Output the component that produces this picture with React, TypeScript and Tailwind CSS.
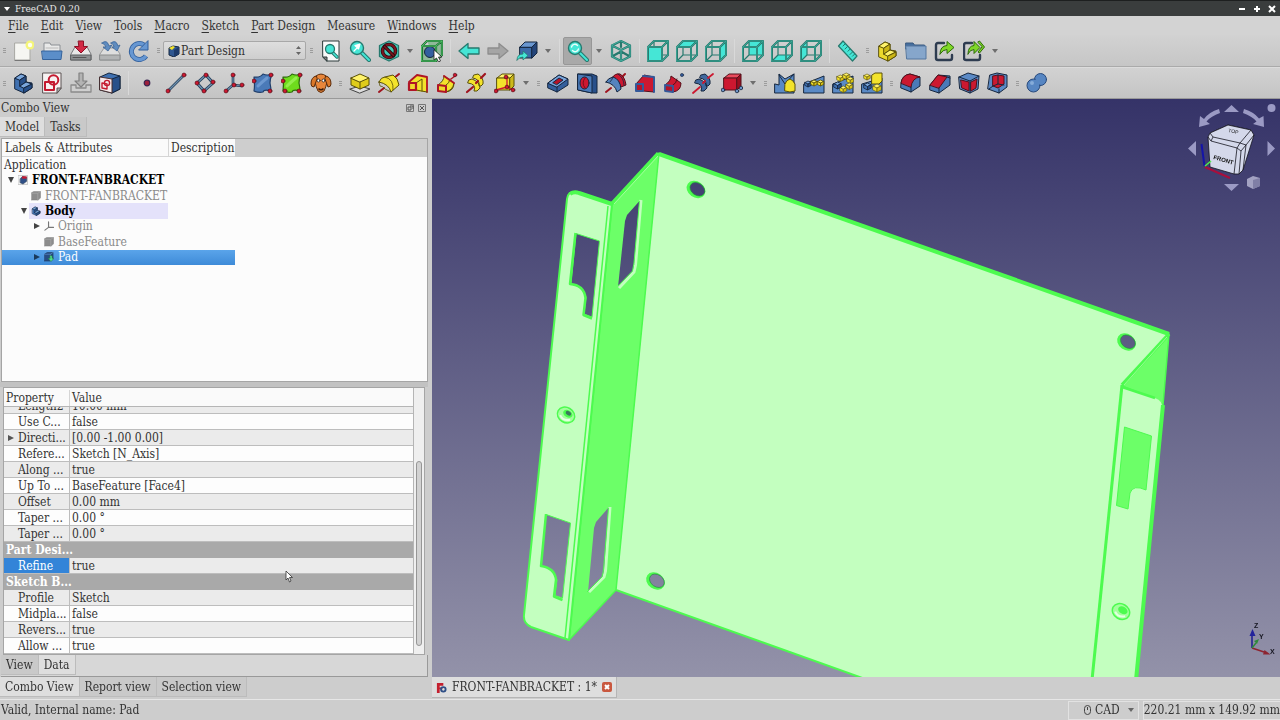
import React, { useLayoutEffect, useRef, useState } from 'react';
import clsx from 'clsx';

/* ---------- icons ---------- */

const Svg: React.FC<{ children: React.ReactNode; size?: number }> = ({ children, size = 22 }) => (
  <svg width={size} height={size} viewBox="0 0 22 22" fill="none" strokeLinejoin="round" strokeLinecap="round" aria-hidden="true">
    {children}
  </svg>
);

const TEAL = '#45e6d6';
const TEAL_DARK = '#26796e';
const BLUE = '#4a7ab8';
const NAVY = '#15263f';
const YELLOW = '#f3e32c';
const OLIVE = '#5a5008';
const RED = '#cc1830';

const IsoBox: React.FC<{ x: number; y: number; s: number; c: [string, string, string]; line: string; w?: number }> = ({ x, y, s, c, line, w = 1 }) => {
  const h = s / 2;
  const q = s / 4;
  return (
    <g stroke={line} strokeWidth={w}>
      <path d={`M${x} ${y + q}l${h} ${-q}l${h} ${q}l${-h} ${q}z`} fill={c[0]} />
      <path d={`M${x} ${y + q}l${h} ${q}v${h}l${-h} ${-q}z`} fill={c[1]} />
      <path d={`M${x + s} ${y + q}l${-h} ${q}v${h}l${h} ${-q}z`} fill={c[2]} />
    </g>
  );
};

const blues: [string, string, string] = ['#7aa6dc', '#3f70b0', '#28508a'];
const yellows: [string, string, string] = ['#fff36b', '#f0df2a', '#d9c414'];

// L-shaped solid used for bodies and parts
const Body: React.FC<{ c: [string, string, string]; line: string; size?: number }> = ({ c, line, size }) => (
  <Svg size={size}>
    <g stroke={line} strokeWidth="1">
      <path d="M3 6l6-4 5 2v6l6 1v5l-8 5-9-4z" fill={c[1]} />
      <path d="M3 6l6-4 5 2-6 4z" fill={c[0]} />
      <path d="M8 8l6-4v6l-6 4z" fill={c[2]} />
      <path d="M8 14l6-4 6 2-8 4z" fill={c[0]} />
      <path d="M12 16l8-4v4l-8 5z" fill={c[2]} />
    </g>
  </Svg>
);

const ViewCube: React.FC<{ face: 'front' | 'top' | 'right' | 'rear' | 'bottom' | 'left' }> = ({ face }) => {
  const faces = {
    front: 'M1 7h14v14h-14z',
    top: 'M1 7l6-6h14l-6 6z',
    right: 'M15 7l6-6v14l-6 6z',
    rear: 'M7 1h14v14h-14z',
    bottom: 'M1 21l6-6h14l-6 6z',
    left: 'M1 7l6-6v14l-6 6z',
  };
  return (
    <Svg>
      <path d={faces[face]} fill={TEAL} />
      <path d="M7 1v14h14M7 15l-6 6" stroke={TEAL_DARK} strokeWidth="1.2" />
      {(face === 'front' || face === 'top' || face === 'right') && <path d={faces[face]} fill={TEAL} />}
      <path d="M1 7h14v14h-14zM7 1h14v14l-6 6M1 7l6-6M15 7l6-6" stroke={TEAL_DARK} strokeWidth="2" />
      <path d="M1 7h14v14h-14zM7 1h14v14l-6 6M1 7l6-6M15 7l6-6" stroke="#3fae9d" strokeWidth="0.800" />
    </Svg>
  );
};

const Lens: React.FC<{ glyph?: React.ReactNode }> = ({ glyph }) => (
  <Svg>
    <path d="M13 13l7 7" stroke={TEAL_DARK} strokeWidth="4" />
    <path d="M13 13l7 7" stroke={TEAL} strokeWidth="2" />
    <circle cx="8" cy="8" r="6.500" fill={TEAL} stroke={TEAL_DARK} strokeWidth="1.400" />
    {glyph}
  </Svg>
);

const icons: Record<string, React.ReactNode> = {
  new: (
    <Svg>
      <path d="M3 3h15v17h-15z" fill="#f6f6f2" stroke="#a9a9a4" />
      <path d="M3 20.500h15" stroke="#777" strokeWidth="1" />
      <circle cx="18" cy="5" r="4.500" fill="#f4f57a" />
      <circle cx="18" cy="5" r="2.200" fill="#fffff0" />
    </Svg>
  ),
  open: (
    <Svg>
      <path d="M3 12v-9h6l1 2h9v7z" fill="#e9e9e9" stroke="#8b8f94" />
      <path d="M1 11h20l-1 8.500h-18z" fill="#5b8ec9" stroke="#35639c" />
      <path d="M5 8h12" stroke="#b8b8b8" />
    </Svg>
  ),
  save: (
    <Svg>
      <path d="M1 14l4-7h12l4 7v6h-20z" fill="#e8e8e8" stroke="#77797b" />
      <path d="M1 15h20v5h-20z" fill="#8d9092" stroke="#5c5f61" />
      <path d="M3 17.500h13" stroke="#555" />
      <path d="M8.500 1h5v5.500h4l-6.500 6.500-6.500-6.500h4z" fill="#d32a45" stroke="#8c1227" />
    </Svg>
  ),
  saveAs: (
    <Svg>
      <path d="M1 14l4-6h12l4 6v6h-20z" fill="#dedede" stroke="#9a9c9e" />
      <path d="M1 15h20v5h-20z" fill="#b2b4b5" stroke="#8b8d8e" />
      <path d="M3 3q5-4 7 3l3-1-4 6-5-4 3 0q-1-3-4-4zM12 3q5-4 7 3l2-1-3 6-5-4 2 0q0-3-3-4z" fill="#5f8cc0" stroke="#3b6597" strokeWidth="0.800" />
    </Svg>
  ),
  refresh: (
    <Svg>
      <path d="M18 16a8 8 0 1 1 -2 -11" stroke="#315f9c" strokeWidth="5" strokeLinecap="butt" />
      <path d="M18 16a8 8 0 1 1 -2 -11" stroke="#6797d2" strokeWidth="3.400" strokeLinecap="butt" />
      <path d="M20 1v9h-9z" fill="#6797d2" stroke="#315f9c" />
    </Svg>
  ),
  fitAll: (
    <Svg>
      <path d="M3 1h16v20h-12l-4-4z" fill="#fafafa" stroke="#2c3b3a" />
      <path d="M3 17h4v4z" fill="#888" stroke="#2c3b3a" />
      <path d="M12 12l5 5" stroke={TEAL_DARK} strokeWidth="3.500" />
      <path d="M12 12l5 5" stroke={TEAL} strokeWidth="1.600" />
      <circle cx="10" cy="9" r="4.500" fill={TEAL} stroke={TEAL_DARK} strokeWidth="1.300" />
    </Svg>
  ),
  fitSel: <Lens glyph={<path d="M5 11l4-4m-3-1.500l5-1.500-1.500 5z" fill="#fff" stroke="#fff" strokeWidth="1.200" />} />,
  drawStyle: (
    <Svg>
      <path d="M11 1l9.500 4.500v11l-9.500 4.500-9.500-4.500v-11z" fill="#45c9b9" stroke={TEAL_DARK} strokeWidth="1.300" />
      <circle cx="11" cy="11" r="6.500" stroke="#2b0b0e" strokeWidth="3.600" />
      <circle cx="11" cy="11" r="6.500" stroke="#7d1620" strokeWidth="2" />
      <path d="M6.500 6.500l9 9" stroke="#2b0b0e" strokeWidth="3.400" />
      <path d="M6.500 6.500l9 9" stroke="#7d1620" strokeWidth="1.500" />
    </Svg>
  ),
  boxSel: (
    <Svg>
      <path d="M1 6h14v15h-14zM6 1h15v14l-6 6M1 6l5-5" fill="#8fb99a" />
      <circle cx="9" cy="12" r="5.500" fill="#335f9f" stroke={NAVY} />
      <path d="M1 6h14v15h-14zM6 1h15v14l-6 6M1 6l5-5M15 6l6-5" stroke="#1c6a30" strokeWidth="2.200" />
      <path d="M1 6h14v15h-14zM6 1h15v14l-6 6M1 6l5-5M15 6l6-5" stroke="#4fc267" strokeWidth="1" />
      <path d="M13 10v10l2.500-2 2 4 2-1-2-4h3z" fill="#fff" stroke="#222" strokeWidth="0.800" />
    </Svg>
  ),
  back: (
    <Svg>
      <path d="M1 11l9-7.500v4.500h11v6h-11v4.500z" fill={TEAL} stroke={TEAL_DARK} strokeWidth="1.300" />
    </Svg>
  ),
  forward: (
    <Svg>
      <path d="M21 11l-9-7.500v4.500h-11v6h11v4.500z" fill="#a5a5a5" stroke="#8d8d8d" strokeWidth="1.300" />
    </Svg>
  ),
  linkGo: (
    <Svg>
      <path d="M4 7h12v11h-12z" fill="#3d6ba8" stroke={NAVY} />
      <path d="M4 7l5-5h12l-5 5z" fill="#6a97d0" stroke={NAVY} />
      <path d="M16 7l5-5v11l-5 5z" fill="#24457a" stroke={NAVY} />
      <path d="M1 20q0-6 6-6v-3l5 4.500-5 4.500v-3q-3 0-6 3z" fill={TEAL} stroke={TEAL_DARK} strokeWidth="0.800" />
    </Svg>
  ),
  zoomTool: <Lens glyph={<path d="M4.500 7a3.500 3.500 0 0 1 6-1.500M11.500 9a3.500 3.500 0 0 1 -6 1.500" stroke="#e8fffb" strokeWidth="1.400" />} />,
  iso: (
    <Svg>
      <path d="M11 1l9 4.500v11l-9 4.500-9-4.500v-11zM2 5.500l9 4.500 9-4.500M11 10v11M11 1v6M2 16.500l9-5 9 5" stroke={TEAL_DARK} strokeWidth="2.200" />
      <path d="M11 1l9 4.500v11l-9 4.500-9-4.500v-11zM2 5.500l9 4.500 9-4.500M11 10v11" stroke="#48b3a4" strokeWidth="0.900" />
    </Svg>
  ),
  front: <ViewCube face="front" />,
  top: <ViewCube face="top" />,
  right: <ViewCube face="right" />,
  rear: <ViewCube face="rear" />,
  bottom: <ViewCube face="bottom" />,
  left: <ViewCube face="left" />,
  ruler: (
    <Svg>
      <path d="M6 1l14 15-4.500 5-14-15z" fill={TEAL} stroke={TEAL_DARK} strokeWidth="1.200" />
      <path d="M8 4l-2 2M10.500 6.500l-2.500 2.500M13 9.200l-2 2M15.500 12l-2.500 2.500M17.500 14.200l-2 2" stroke={TEAL_DARK} />
    </Svg>
  ),
  part: <Body c={['#fff36b', '#ecd92c', '#cbb616']} line={OLIVE} />,
  folder: (
    <Svg>
      <path d="M1 3h7l1.500 2h10v4h-18.500z" fill="#466f9f" stroke="#39597f" />
      <path d="M1 6h20v13h-19z" fill="#86a6cb" stroke="#54779f" />
    </Svg>
  ),
  link: (
    <Svg>
      <path d="M10 3h-6q-2 0-2 2v13q0 2 2 2h12q2 0 2-2v-3" stroke="#2e3c50" strokeWidth="2.400" />
      <path d="M6 14q0-8 7-8.500v-4l7 6-7 6v-4q-4 0-7 4.500z" fill="#7fd828" stroke="#2c6a08" />
    </Svg>
  ),
  linkGroup: (
    <Svg>
      <path d="M9 3h-6q-2 0-2 2v13q0 2 2 2h12q2 0 2-2v-3" stroke="#2e3c50" strokeWidth="2.400" />
      <path d="M15 2l1.500-1 5 6-5 6-1.500-1 4-5z" fill="#7fd828" stroke="#2c6a08" />
      <path d="M5 14q0-8 6-8.500v-4l6 6-6 6v-4q-4 0-6 4.500z" fill="#7fd828" stroke="#2c6a08" />
    </Svg>
  ),
  body: <Body c={blues} line={NAVY} />,
  sketch: (
    <Svg>
      <path d="M2 1h18v15l-4 5h-14z" fill="#f7f2f2" stroke="#5c5555" />
      <path d="M20 16h-4v5z" fill="#aaa" stroke="#5c5555" />
      <path d="M4 10h9v8h-9z" stroke="#c41a30" strokeWidth="2" />
      <circle cx="12.500" cy="8" r="4.800" stroke="#c41a30" strokeWidth="2" />
    </Svg>
  ),
  mapSketch: (
    <Svg>
      <path d="M1 13h5v3h10v-3h5v7h-20z" fill="#cfcfcf" stroke="#8b8b8b" strokeWidth="1.300" />
      <path d="M9 1h4v8h4l-6 6-6-6h4z" fill="#b3b3b3" stroke="#808080" strokeWidth="1.200" />
    </Svg>
  ),
  editSketch: (
    <Svg>
      <path d="M1 5l9-4 11 3v13l-8 4-12-3z" fill="#3f70b0" stroke={NAVY} />
      <path d="M13 7l8-3v13l-8 4z" fill="#28508a" stroke={NAVY} />
      <path d="M1 5l12 2v14l-12-3z" fill="#f5e9ea" stroke="#4a3030" />
      <path d="M3 11l5 1v5l-5-1z" stroke="#c41a30" strokeWidth="1.400" />
      <circle cx="8" cy="11" r="2.600" stroke="#c41a30" strokeWidth="1.400" />
    </Svg>
  ),
  point: (
    <Svg>
      <circle cx="11" cy="11" r="2.800" fill="#9d1f3c" stroke="#3a2550" strokeWidth="1.200" />
    </Svg>
  ),
  line: (
    <Svg>
      <path d="M3 19l16-16" stroke="#1f3a55" strokeWidth="2.600" />
      <path d="M3 19l16-16" stroke="#6d8fae" strokeWidth="1.200" />
      <circle cx="3" cy="19" r="2" fill={RED} stroke="#4b0a14" strokeWidth="0.600" />
      <circle cx="19" cy="3" r="2" fill={RED} stroke="#4b0a14" strokeWidth="0.600" />
    </Svg>
  ),
  plane: (
    <Svg>
      <path d="M12 3l7 8-9 8-7-8z" stroke="#1f3a55" strokeWidth="3" />
      <path d="M12 3l7 8-9 8-7-8z" stroke="#6d8fae" strokeWidth="1.400" />
      {[[12, 3], [19, 10], [10, 19], [3, 11]].map(([cx, cy]) => (
        <circle key={cx} cx={cx} cy={cy} r="2" fill={RED} stroke="#4b0a14" strokeWidth="0.600" />
      ))}
    </Svg>
  ),
  lcs: (
    <Svg>
      <path d="M10 3v10l9 1M10 13l-7 6" stroke="#1f3a55" strokeWidth="2.600" />
      <path d="M10 3v10l9 1M10 13l-7 6" stroke="#6d8fae" strokeWidth="1.200" />
      {[[10, 3], [19, 13], [3, 19], [11, 13]].map(([cx, cy]) => (
        <circle key={cx} cx={cx} cy={cy} r="2" fill={RED} stroke="#4b0a14" strokeWidth="0.600" />
      ))}
    </Svg>
  ),
  shape: (
    <Svg>
      <path d="M2 5q6 1 9-3 4 2 9 0-2 5-2 9 1 5 1 8-7-2-8 1-4 1-9-1 1-6 0-14z" fill={BLUE} stroke="#203e6a" strokeWidth="1.200" />
      <path d="M6 14q4-4 9-8" stroke="#6c98d0" strokeWidth="3" />
      {[[19, 3], [2, 9], [18, 19]].map(([cx, cy]) => (
        <circle key={cx} cx={cx} cy={cy} r="2" fill={RED} stroke="#4b0a14" strokeWidth="0.600" />
      ))}
    </Svg>
  ),
  subShape: (
    <Svg>
      <path d="M2 5q6 1 9-3 4 2 9 0-2 5-2 9 1 5 1 8-7-2-8 1-4 1-9-1 1-6 0-14z" fill="#6fdc1d" stroke="#2b6a08" strokeWidth="1.200" />
      <path d="M6 14q4-4 9-8" stroke="#93ee4c" strokeWidth="3" />
      {[[19, 3], [2, 9], [18, 19], [4, 19]].map(([cx, cy]) => (
        <circle key={cx} cx={cx} cy={cy} r="2" fill={RED} stroke="#4b0a14" strokeWidth="0.600" />
      ))}
    </Svg>
  ),
  clone: (
    <Svg>
      <path d="M6 4q5-4 10 0l1 6q-1 5-3 9-3 3-6 0-2-4-3-9z" fill="#e8863a" stroke="#5c2c0c" />
      <path d="M6 4q-5 1-5 8 0 3 3 3l3-8zM16 4q5 1 5 8 0 3-3 3l-3-8z" fill="#d9782a" stroke="#5c2c0c" />
      <circle cx="8.500" cy="8.500" r="1.500" fill="#fff" stroke="#222" strokeWidth="0.800" />
      <circle cx="13.500" cy="8.500" r="1.500" fill="#fff" stroke="#222" strokeWidth="0.800" />
      <path d="M9 17q2 1.500 4 0" stroke="#3a1a08" strokeWidth="1.600" />
    </Svg>
  ),
  pad: (
    <Svg>
      <path d="M1 17l10-3 10 3-10 4z" fill="#ddd" stroke="#444" />
      <path d="M2 6v7l9 4 9-4v-7l-9 3z" fill="#dfcc1a" stroke={OLIVE} />
      <path d="M2 6l9-4 9 4-9 4z" fill="#fff36b" stroke={OLIVE} />
      <path d="M11 10v7" stroke={OLIVE} />
    </Svg>
  ),
  revolve: (
    <Svg>
      <path d="M1 20l5-4M16 6l5-4" stroke="#a0141f" strokeWidth="2" />
      <path d="M1 10q2-5 6-5l8-2q5 3 6 10l-8 7q-2-8-12-10z" fill={YELLOW} stroke={OLIVE} />
      <path d="M1 10l1 4q3 0 5 3l6 3M7 5q9 2 8 13" stroke={OLIVE} strokeWidth="0.800" />
    </Svg>
  ),
  loft: (
    <Svg>
      <path d="M2 10l8-7 10 2v15l-12-1z" fill={YELLOW} />
      <path d="M2 10l8-7 10 2v15" stroke="#b01525" strokeWidth="1.800" />
      <path d="M9 18l11 2M9 11l6-4v12" stroke={OLIVE} />
      <path d="M2 11h7v7h-7z" fill="#efd92c" stroke="#b01525" strokeWidth="2.200" />
    </Svg>
  ),
  pipe: (
    <Svg>
      <path d="M2 13q6-4 6-9l10 7q0 8-8 9z" fill={YELLOW} stroke={OLIVE} />
      <path d="M8 4l10 7q-1 7-8 9M9 14q5-3 5-7" stroke={OLIVE} />
      <path d="M2 13l8 1v6l-8-1zM8 4l10 7" fill="#efd92c" stroke="#b01525" strokeWidth="2" />
      <path d="M15 7l4-3" stroke="#b01525" strokeWidth="1.400" />
      <circle cx="19" cy="3" r="1.800" fill={RED} stroke="#4b0a14" strokeWidth="0.600" />
    </Svg>
  ),
  helix: (
    <Svg>
      <path d="M4 8l3-1q8 3 8 9l-3 3-3 0q3-7-6-8zM9 3l4-1q6 4 5 10l-2 2-2 0q1-7-6-8z" fill={YELLOW} stroke={OLIVE} />
      <path d="M2 20l6-5M11 11l2-2M16 6l4-4" stroke="#a0141f" strokeWidth="2.200" />
    </Svg>
  ),
  addPrim: (
    <Svg>
      <path d="M3 6l5-4h12l-4 4z" fill="#fff36b" stroke={OLIVE} />
      <path d="M3 6h13v12h-13z" fill={YELLOW} stroke={OLIVE} />
      <path d="M16 6l4-4v12l-4 4z" fill="#cdb91a" stroke={OLIVE} />
      <path d="M2 18l11-3 6 3M13 5v10" stroke={RED} strokeWidth="1.300" />
      {[[2, 19], [13, 15], [12, 5], [19, 18]].map(([cx, cy]) => (
        <circle key={cx} cx={cx} cy={cy} r="1.900" fill={RED} stroke="#4b0a14" strokeWidth="0.600" />
      ))}
    </Svg>
  ),
  pocket: (
    <Svg>
      <path d="M1 11l11-8 9 4v6l-11 7-9-4z" fill="#345f9c" stroke={NAVY} />
      <path d="M1 11l11-8 9 4-11 8z" fill="#7aa6dc" stroke={NAVY} />
      <path d="M6 10.500l6-4.500 4 2-6 4.500z" fill="#b51428" stroke={NAVY} />
      <path d="M10 15v5" stroke={NAVY} />
    </Svg>
  ),
  hole: (
    <Svg>
      <path d="M2 2h14l5 2v17h-5l-14-3z" fill="#28508a" stroke={NAVY} />
      <path d="M2 2l14 2v17l-14-3z" fill={BLUE} stroke={NAVY} />
      <ellipse cx="8.500" cy="11" rx="4.500" ry="6" fill={RED} stroke={NAVY} />
      <path d="M9 6q-4 5 0 10" stroke="#7c0d1c" />
    </Svg>
  ),
  groove: (
    <Svg>
      <path d="M1 20l5-4M16 6l4-4" stroke="#a0141f" strokeWidth="2" />
      <path d="M7 6q3-5 8-4 5 3 6 11l-5 2q-2-7-9-9z" fill={RED} stroke="#54101a" />
      <path d="M1 10q2-4 7-5 7 2 8 12l-4 3q-2-8-11-10z" fill="#5584bf" stroke={NAVY} />
      <path d="M8 5q-1 3-3 5M13 2q6 4 6 11" stroke={NAVY} strokeWidth="0.800" />
    </Svg>
  ),
  subLoft: (
    <Svg>
      <path d="M2 12l8-9 10 2v15l-11-1z" fill={RED} stroke="#54101a" />
      <path d="M9 4l11 1v15" stroke="#33599a" strokeWidth="2" />
      <path d="M2 12h7v7h-7z" fill="#b51428" stroke="#33599a" strokeWidth="2" />
    </Svg>
  ),
  subPipe: (
    <Svg>
      <path d="M2 13q6-4 6-9l10 7q0 8-8 9z" fill={RED} stroke="#54101a" />
      <path d="M9 14q5-3 5-7" stroke="#54101a" />
      <path d="M2 13l8 1v6l-8-1z" fill="#b51428" stroke="#33599a" strokeWidth="1.800" />
      <circle cx="19" cy="3" r="1.600" fill="#33599a" stroke={NAVY} strokeWidth="0.600" />
    </Svg>
  ),
  subHelix: (
    <Svg>
      <path d="M4 8l3-1q8 3 8 9l-3 3-3 0q3-7-6-8zM9 3l4-1q6 4 5 10l-2 2-2 0q1-7-6-8z" fill="#40699f" stroke={NAVY} />
      <path d="M1 21l7-6M11 11l2-2M16 6l5-4" stroke={RED} strokeWidth="1.800" />
    </Svg>
  ),
  subPrim: (
    <Svg>
      <path d="M3 6l5-4h12l-4 4z" fill="#ea4a5c" stroke="#54101a" />
      <path d="M3 6h13v12h-13z" fill={RED} stroke="#54101a" />
      <path d="M16 6l4-4v12l-4 4z" fill="#980f20" stroke="#54101a" />
      {[[2, 18], [16, 19], [20, 16]].map(([cx, cy]) => (
        <circle key={cx} cx={cx} cy={cy} r="1.800" fill="#6c94c8" stroke={NAVY} strokeWidth="0.800" />
      ))}
    </Svg>
  ),
  mirror: (
    <Svg>
      <path d="M1 12l4 1v-11l6 5 9-5v19h-19z" fill="#5a8ac6" stroke={NAVY} />
      <path d="M5 3l6 9 9-10" stroke={NAVY} />
      <path d="M11 12q1-4 5-5 3 1 5 5v7q-5 2-10 0z" fill={YELLOW} stroke={OLIVE} />
    </Svg>
  ),
  linPattern: (
    <Svg>
      <path d="M1 12l20-8v17h-20z" fill="#5a8ac6" stroke={NAVY} />
      <IsoBox x={2} y={9} s={6} c={blues} line={NAVY} w={0.8} />
      <IsoBox x={8} y={8} s={6} c={yellows} line={OLIVE} w={0.8} />
      <IsoBox x={14.500} y={8} s={6} c={yellows} line={OLIVE} w={0.8} />
    </Svg>
  ),
  polPattern: (
    <Svg>
      <path d="M1 12l20-8v17h-20z" fill="#5a8ac6" stroke={NAVY} />
      {[[5, 3], [11, 1], [15, 5], [14, 11], [8, 14]].map(([x, y]) => (
        <IsoBox key={x} x={x} y={y} s={6.500} c={yellows} line={OLIVE} w={0.6} />
      ))}
      <IsoBox x={2} y={10} s={7} c={blues} line={NAVY} w={0.8} />
    </Svg>
  ),
  multi: (
    <Svg>
      <path d="M1 12l20-6v15h-20z" fill="#5a8ac6" stroke={NAVY} />
      <path d="M11 3l3-2h7v8l-3 3h-7z" fill={YELLOW} stroke={OLIVE} />
      <IsoBox x={3} y={2} s={6} c={yellows} line={OLIVE} w={0.6} />
      <IsoBox x={3} y={11} s={7} c={blues} line={NAVY} w={0.8} />
      <IsoBox x={12} y={12} s={8} c={yellows} line={OLIVE} w={0.6} />
    </Svg>
  ),
  fillet: (
    <Svg>
      <path d="M1 11q1-8 9-9l10 3v9l-9 6-10-4z" fill={BLUE} stroke={NAVY} />
      <path d="M1 11q1-8 9-9l10 3q-8 1-9 10z" fill={RED} stroke="#54101a" />
      <path d="M11 15v5" stroke={NAVY} />
    </Svg>
  ),
  chamfer: (
    <Svg>
      <path d="M1 13l8-10 12 1v9l-11 8-9-3z" fill={BLUE} stroke={NAVY} />
      <path d="M1 13l8-10 9 2-8 11z" fill={RED} stroke="#54101a" />
      <path d="M10 16v5M18 5l3 1" stroke={NAVY} />
    </Svg>
  ),
  draft: (
    <Svg>
      <path d="M1 5l9-4 11 3-1 13-8 4-10-4z" fill="#5b8ac6" stroke={NAVY} />
      <path d="M3 8l8 2v9l-7-3zM13 10l6-3-1 9-5 3z" fill={RED} stroke="#54101a" />
      <path d="M1 5l11 4 9-5M12 9v12" stroke={NAVY} />
    </Svg>
  ),
  thickness: (
    <Svg>
      <path d="M3 3l7-2 10 2v12l-8 6-11-4z" fill="#5b8ac6" stroke={NAVY} />
      <path d="M6 4l5-1 6 1v8l-6 4-5-2z" fill={RED} stroke="#54101a" />
      <path d="M12 17v4M6 14l-4 3M11 3v9l-5 2M11 12l6 1" stroke={NAVY} />
    </Svg>
  ),
  boolean: (
    <Svg>
      <circle cx="14.500" cy="7.500" r="6" fill="#5786c2" stroke="#27497c" />
      <circle cx="7.500" cy="13.500" r="6.500" fill="#5786c2" stroke="#27497c" />
      <circle cx="14" cy="8" r="4.500" fill="#5786c2" />
      <circle cx="6" cy="11" r="2" fill="#86acd9" />
    </Svg>
  ),
};

/* ---------- toolbars ---------- */

const ToolButton: React.FC<{ name: string; pressed?: boolean }> = ({ name, pressed }) => (
  <button
    aria-label={name}
    className={clsx('w-[29px] h-7 flex items-center justify-center shrink-0 rounded-xs', pressed && 'bg-[#a9a9a9] border border-[#979797]')}
  >
    {icons[name]}
  </button>
);

const Arrow = () => (
  <button aria-label="More" className="w-[14px] h-7 flex items-center justify-center shrink-0">
    <svg width="6" height="4" viewBox="0 0 6 4"><path d="M0 0h6l-3 4z" fill="#6e6e6e" /></svg>
  </button>
);

const Sep = () => <div className="w-2 shrink-0 flex justify-center"><div className="w-px h-6 bg-[#d9d9d9]" /></div>;

const Handle: React.FC<{ lead?: boolean }> = ({ lead }) => (
  <div className={clsx('shrink-0 flex flex-col items-center gap-px', lead ? 'w-2' : 'w-[10px]')}>
    {[0, 1, 2].map(i => <div key={i} className="w-[3px] h-px bg-[#9c9c9c]" />)}
  </div>
);

// "|" separator, ":" handle, "v" drop-down arrow
const renderTools = (spec: string) =>
  spec.split(' ').map((t, i) => {
    if (t === '|') return <Sep key={i} />;
    if (t === ':') return <Handle key={i} />;
    if (t === 'v') return <Arrow key={i} />;
    return <ToolButton key={i} name={t} pressed={t === 'zoomTool'} />;
  });

const WorkbenchSelect = () => (
  <div className="w-[143px] h-[19px] shrink-0 flex items-center gap-px px-1 rounded-xs border border-[#a8a8a8] bg-linear-to-b from-[#dedede] to-[#cecece]">
    <svg width="12" height="12" viewBox="0 0 12 12" aria-hidden="true">
      <path d="M1 3l4-2 6 1v7l-5 3-5-2z" fill="#2f5791" stroke={NAVY} />
      <path d="M1 3l4-2 2 1-3 3z" fill={YELLOW} />
      <path d="M6 5l5-3v7l-5 3z" fill="#1d3b6b" />
    </svg>
    <select aria-label="Workbench" className="appearance-none bg-transparent flex-1 min-w-0 outline-none leading-4">
      <option>Part Design</option>
    </select>
    <svg width="5" height="9" viewBox="0 0 5 9"><path d="M0 3l2.500-3 2.500 3zM0 6l2.500 3 2.500-3z" fill="#666" /></svg>
  </div>
);

/* ---------- model tree ---------- */

interface TreeNode {
  label: string;
  depth: number;
  open?: boolean;
  state?: 'bold' | 'dim' | 'active' | 'selected';
  icon?: React.ReactNode;
}

const greyBox = (
  <Svg size={10}>
    <path d="M1 4l5-3h15v14l-5 5h-15z" fill="#8c8c8c" stroke="#7d7d7d" />
    <path d="M1 5h14v15M15 5l6-4" stroke="#aaa" strokeWidth="1.500" />
  </Svg>
);

const docIcon = (
  <Svg size={10}>
    <path d="M1 1h20v20h-20z" fill="#f2f2f2" stroke="#999" />
    <path d="M5 8l5-5 9 2v9l-8 6-6-3z" fill="#2f4f86" stroke={NAVY} />
    <path d="M9 3h10v5h-10z" fill={RED} />
  </Svg>
);

const nodes: TreeNode[] = [
  { label: 'Application', depth: 0 },
  { label: 'FRONT-FANBRACKET', depth: 1, open: true, state: 'bold', icon: docIcon },
  { label: 'FRONT-FANBRACKET', depth: 2, state: 'dim', icon: greyBox },
  { label: 'Body', depth: 2, open: true, state: 'active', icon: <Body c={blues} line={NAVY} size={10} /> },
  {
    label: 'Origin', depth: 3, open: false, state: 'dim',
    icon: <Svg size={10}><path d="M10 2v12h11M10 14l-8 6" stroke="#777" strokeWidth="2.500" /></Svg>,
  },
  { label: 'BaseFeature', depth: 3, state: 'dim', icon: greyBox },
  {
    label: 'Pad', depth: 3, open: false, state: 'selected',
    icon: (
      <Svg size={10}>
        <path d="M1 5l6-4h13v13l-6 6h-13z" fill="#274d84" stroke={NAVY} />
        <path d="M1 5h13v15M14 5l6-4" stroke="#5f8cc6" strokeWidth="1.500" />
        <path d="M13 8h5v6h4l-6.500 7-6.500-7h4z" fill="#4fe08a" stroke="#1d6b3c" />
      </Svg>
    ),
  },
];

const indent = ['pl-0.5', 'pl-[3px]', 'pl-4', 'pl-[29px]'];

const TreeRow: React.FC<{ node: TreeNode }> = ({ node }) => {
  const { label, depth, open, state, icon } = node;
  return (
    <li className={clsx('flex items-center w-[233px]', indent[depth], state === 'selected' && 'bg-linear-to-b from-[#5aa4ea] to-[#3e8bd8]')}>
      {depth > 0 && (
        <span className="w-[11px] flex justify-center shrink-0">
          {open !== undefined && (
            <svg width="6" height="6" viewBox="0 0 6 6">
              <path d={open ? 'M0 0h6l-3 6z' : 'M0 0l6 3-6 3z'} fill={state === 'selected' ? '#1a3a5c' : '#444'} />
            </svg>
          )}
        </span>
      )}
      <span
        className={clsx(
          'flex items-center gap-1 h-full',
          depth > 0 && 'pl-0.5',
          state === 'active' && 'bg-[#e4e2fa] flex-1 mr-[67px]',
        )}
      >
        {icon}
        <span
          className={clsx(
            'whitespace-nowrap',
            (state === 'bold' || state === 'active') && 'font-bold text-black',
            state === 'dim' && 'text-[#8a8a8a]',
            state === 'selected' && 'text-white',
          )}
        >
          {label}
        </span>
      </span>
    </li>
  );
};

/* ---------- properties ---------- */

interface Property {
  name: string;
  value?: string; // group header when missing
  expandable?: boolean;
}

const properties: Property[] = [
  { name: 'Length2', value: '10.00 mm' },
  { name: 'Use C...', value: 'false' },
  { name: 'Directi...', value: '[0.00 -1.00 0.00]', expandable: true },
  { name: 'Refere...', value: 'Sketch [N_Axis]' },
  { name: 'Along ...', value: 'true' },
  { name: 'Up To ...', value: 'BaseFeature [Face4]' },
  { name: 'Offset', value: '0.00 mm' },
  { name: 'Taper ...', value: '0.00 °' },
  { name: 'Taper ...', value: '0.00 °' },
  { name: 'Part Desi...' },
  { name: 'Refine', value: 'true' },
  { name: 'Sketch B...' },
  { name: 'Profile', value: 'Sketch' },
  { name: 'Midpla...', value: 'false' },
  { name: 'Revers...', value: 'true' },
  { name: 'Allow ...', value: 'true' },
];

const PropertyTable = () => {
  const scroller = useRef<HTMLDivElement>(null);
  const [selected, setSelected] = useState('Refine');

  useLayoutEffect(() => {
    if (scroller.current) scroller.current.scrollTop = scroller.current.scrollHeight;
  }, []);

  return (
    <div className="flex h-[268px] mx-[3px] border border-[#a5a5a5] bg-white">
      <div className="flex-1 min-w-0 flex flex-col">
        <div className="flex h-[19px] shrink-0 items-center pt-px bg-[#fafafa] border-b border-[#b5b5b5]">
          <span id="prop-name" className="w-[66px] pl-0.5 border-r border-[#d5d5d5]">Property</span>
          <span id="prop-value" className="pl-0.5">Value</span>
        </div>
        <div ref={scroller} className="flex-1 overflow-y-auto [scrollbar-width:none]">
          <table aria-labelledby="prop-name prop-value" className="w-full table-fixed border-separate border-spacing-0 leading-[14px]">
            <colgroup>
              <col className="w-[66px]" />
              <col />
            </colgroup>
            <tbody>
              {properties.map((p, i) =>
                p.value === undefined ? (
                  <tr key={i} className="h-4 bg-[#a9a9a9] text-white font-bold">
                    <td colSpan={2} className="p-0 pl-0.5">{p.name}</td>
                  </tr>
                ) : (
                  <tr key={i} className={clsx('h-4', i % 2 === 0 ? 'bg-[#ebebeb]' : 'bg-[#fdfdfd]')} onClick={() => setSelected(p.name)}>
                    <td className={clsx('p-0 pt-px border-b border-r border-[#bdbdbd] whitespace-nowrap', selected === p.name && 'bg-[#3384d8] text-white')}>
                      <div className="flex items-center">
                        <span className="w-[14px] pl-1 shrink-0">
                          {p.expandable && <svg width="6" height="6" viewBox="0 0 6 6"><path d="M0 0l6 3-6 3z" fill="#555" /></svg>}
                        </span>
                        {p.name}
                      </div>
                    </td>
                    <td className="p-0 pt-px pl-0.5 border-b border-[#bdbdbd]">{p.value}</td>
                  </tr>
                ),
              )}
            </tbody>
          </table>
        </div>
      </div>
      <div className="w-[11px] border-l border-[#b5b5b5] bg-[#efefef] flex flex-col justify-end items-center pb-2">
        <div className="w-[6px] h-[185px] rounded-full border border-[#969696] bg-[#d2d2d2]" />
      </div>
    </div>
  );
};

const Tab: React.FC<{ label: string; active?: boolean; onClick?: () => void }> = ({ label, active, onClick }) => (
  <button
    role="tab"
    aria-selected={!!active}
    onClick={onClick}
    className={clsx('h-5 px-[5px] border-r border-b border-[#bcbcbc] whitespace-nowrap', active ? 'bg-[#dedede]' : 'bg-[#c9c9c9]')}
  >
    {label}
  </button>
);

const Tabs: React.FC<{ labels: string[]; initial: string }> = ({ labels, initial }) => {
  const [current, setCurrent] = useState(initial);
  return (
    <div role="tablist" className="flex">
      {labels.map(l => <Tab key={l} label={l} active={l === current} onClick={() => setCurrent(l)} />)}
    </div>
  );
};

/* ---------- 3D view ---------- */

const LIGHT = '#c3ffbf';
const GREEN = '#6cff68';
const EDGE = '#4dfb4f';

const Scene = () => (
  <svg className="block w-full h-full" viewBox="432 99 848 578" preserveAspectRatio="xMaxYMin slice" strokeLinejoin="round">
    <defs>
      <linearGradient id="sky" gradientUnits="userSpaceOnUse" x1="0" y1="99" x2="0" y2="677">
        <stop offset="0" stopColor="#353368" />
        <stop offset="1" stopColor="#9392a9" />
      </linearGradient>
    </defs>
    <path d="M432 99h848v578h-848z" fill="url(#sky)" />

    {/* plate */}
    <path d="M659 153L1169 334L1122 386L1092 680H868L616 590z" fill={LIGHT} />
    <path d="M659 154L1169 334" stroke={EDGE} strokeWidth="4" />
    <path d="M616 590L868 680" stroke={EDGE} strokeWidth="2" />

    {/* left web */}
    <path d="M612 205L659 153L616 590L569 640z" fill={GREEN} stroke={EDGE} strokeWidth="1.500" />
    <path d="M612 203L658 153" stroke={EDGE} strokeWidth="3" />
    <path d="M614 204L658 156" stroke="#a6ff9f" strokeWidth="1" />
    <path d="M639.500 201L634.500 265L633 271L618 287L625 221L627 215z" fill="url(#sky)" />
    <path d="M641 200L635.500 265L634 272L619 288" fill="none" stroke={LIGHT} strokeWidth="3" />
    <path d="M639.500 201L634 263L632.500 271L618 286" fill="none" stroke={EDGE} strokeWidth="1" />
    <path d="M609 507L604.500 570L603 577L588 592L594 528L596 522z" fill="url(#sky)" />
    <path d="M610 507L605.500 571L604 577L589 592" fill="none" stroke={LIGHT} strokeWidth="3" />
    <path d="M608.500 508L603.500 570L602 577L587 592" fill="none" stroke={EDGE} strokeWidth="1" />

    {/* left flange */}
    <path d="M567 199Q568 191 575 192L612 204L569 640L531 627Q523 623 524 615z" fill={LIGHT} stroke={EDGE} strokeWidth="2" />
    <path d="M570 194Q574 191 579 193L612 204" fill="none" stroke={EDGE} strokeWidth="4" />
    <path d="M608 206L565 638" stroke={EDGE} strokeWidth="1.500" />
    <path d="M576 233.500L599.500 241L592 317L584 314L586 297Q583 286 571 284z" fill="url(#sky)" stroke={EDGE} strokeWidth="1" />
    <path d="M575.500 233L570 284Q584 285 585.500 298L583.500 315L592 318.500" fill="none" stroke={EDGE} strokeWidth="2.500" />
    <path d="M546 514.500L570.500 523L562.500 598L555 595.500L557 580Q554 568 541 566z" fill="url(#sky)" stroke={EDGE} strokeWidth="1" />
    <path d="M546 514L541 566Q555 568 556 580L554 596.500L562.500 600" fill="none" stroke={EDGE} strokeWidth="2.500" />

    {/* right flange */}
    <path d="M1169 334L1122 386L1155 399L1163 405z" fill={GREEN} stroke={EDGE} strokeWidth="1.500" />
    <path d="M1169 334L1122 385" stroke={EDGE} strokeWidth="3.500" />
    <path d="M1167 337L1124 385" stroke="#98ff92" strokeWidth="1" />
    <path d="M1122 387L1155 398Q1163 401 1163 409L1136 680H1092z" fill={LIGHT} />
    <path d="M1122 387L1155 398" stroke={EDGE} strokeWidth="2.500" />
    <path d="M1163 405L1136 680" stroke={EDGE} strokeWidth="4" />
    <path d="M1122 385L1092 680" stroke={EDGE} strokeWidth="3" />
    <path d="M1124.500 427L1151.500 436L1146 490Q1133 484 1130 493L1128 509L1116.500 505.500z" fill={GREEN} stroke={EDGE} strokeWidth="1" />

    {/* holes */}
    {[[696, 189.500], [1126.500, 342], [655.500, 581]].map(([x, y]) => (
      <g key={x} transform={`rotate(35 ${x} ${y})`}>
        <ellipse cx={x} cy={y} rx="10" ry="8" fill={EDGE} />
        <ellipse cx={x + 1} cy={y - 1} rx="8" ry="6" fill="url(#sky)" stroke="#1f8a3a" strokeWidth="0.600" />
      </g>
    ))}
    {[[566, 415], [1121, 611.500]].map(([x, y]) => (
      <g key={x} transform={`rotate(30 ${x} ${y})`}>
        <ellipse cx={x} cy={y} rx="9" ry="7.500" fill="#a4ff9e" stroke={EDGE} strokeWidth="1.500" />
        <ellipse cx={x + 1} cy={y - 2} rx="5" ry="3.500" fill={EDGE} />
        <path d={`M${x - 5} ${y + 3}Q${x} ${y + 7} ${x + 6} ${y + 2}`} stroke="#e4ffe2" strokeWidth="2" fill="none" />
      </g>
    ))}
    <ellipse cx="568.500" cy="413" rx="3" ry="2" fill="#3d7a5d" transform="rotate(30 568 413)" />

    {/* navigation cube */}
    <g fill="#9b9ac4">
      <path d="M1224 112l7.500-7 7.500 7zM1224 184h15l-7.500 7zM1196 141v15l-8-7.500zM1267.500 141v15l7.500-7.500z" />
      <circle cx="1271.500" cy="108" r="4" />
      <path d="M1219 109Q1209 112 1204 119L1200 116L1199 127L1210 124L1206.500 121.500Q1211 116 1220 113zM1244 109Q1254 112 1259 118.500L1263.500 116L1264 127L1253 124L1256.500 121.500Q1252 116 1243 113z" />
    </g>
    <path d="M1201.500 144l3 22" stroke="#1414a8" strokeWidth="2" />
    <path d="M1205 167l25 11" stroke="#a80f3c" strokeWidth="2" />
    <g stroke="#15151f" strokeWidth="0.800" fill="#d4d8ea">
      <path d="M1208 137L1210 133L1228 125L1251 130L1254 135L1243 170L1239 174L1234 174L1210 167z" />
      <path d="M1210 133L1228 125L1251 130L1240 143L1213 137z" />
      <path d="M1208 137L1211 141L1237 148L1234 174M1213 137L1211 141M1240 143L1237 148L1241 151L1246 145L1240 143M1241 151L1239 174M1246 145L1254 135M1246 145L1243 170" fill="none" />
    </g>
    <path d="M1205 166l6-5" stroke="#4df04d" strokeWidth="1.500" />
    <text x="1213" y="159" fontSize="6" fontWeight="bold" fontFamily="Liberation Sans, sans-serif" fill="#111" transform="rotate(16 1213 159)">FRONT</text>
    <text x="1228" y="132" fontSize="5" fontFamily="Liberation Sans, sans-serif" fill="#111" transform="rotate(12 1228 132)">TOP</text>
    <g fill="#a3a2c2">
      <path d="M1247 179l6-3 7 2v8l-7 3-6-3z" />
      <path d="M1253 180l7-2v8l-7 3z" fill="#807fa6" />
    </g>

    {/* axis cross */}
    <path d="M1252 648V634" stroke="#1c1c90" strokeWidth="1.500" />
    <path d="M1249.500 636h6l-3-7z" fill="#23239c" />
    <path d="M1252 648l12 4" stroke="#8d2430" strokeWidth="1.500" />
    <path d="M1263 654.500l1.500-4.500 6 4.500z" fill="#8d2430" />
    <path d="M1252 648l4-5" stroke="#2f8a3c" strokeWidth="1.500" />
    <path d="M1254 641l5-2-2 5z" fill="#2f8a3c" />
    <g fontSize="7" fontWeight="bold" fontFamily="Liberation Sans, sans-serif" fill="#151520">
      <text x="1254" y="628">Z</text>
      <text x="1259" y="639">Y</text>
      <text x="1270" y="654">X</text>
    </g>
  </svg>
);

/* ---------- window ---------- */

const menus = ['File', 'Edit', 'View', 'Tools', 'Macro', 'Sketch', 'Part Design', 'Measure', 'Windows', 'Help'];

export default function App() {
  return (
    <div className="h-screen overflow-hidden flex flex-col bg-[#cdcdcd] text-[#333] text-[12px] leading-4 font-['DejaVu_Serif_Condensed','DejaVu_Serif',serif]">
      <header className="h-4 shrink-0 bg-[#3a3d3d] border-t border-[#1d1f1f] text-[#e6e6e6] flex items-center pl-1 pr-1 text-[10px]">
        <svg width="6" height="4" viewBox="0 0 6 4"><path d="M0 0h6l-3 4z" fill="#fff" /></svg>
        <span className="ml-[5px]">FreeCAD 0.20</span>
        <div className="ml-auto flex gap-[7px]">
          {['M1 4h6', 'M1 4h6M4 1v6', 'M1 1l6 6M7 1l-6 6'].map((d, i) => (
            <button key={d} aria-label={['Minimize', 'Maximize', 'Close'][i]}>
              <svg width="8" height="8" viewBox="0 0 8 8"><path d={d} stroke="#fff" strokeWidth="2" /></svg>
            </button>
          ))}
        </div>
      </header>

      <nav className="h-[19px] shrink-0 flex items-center gap-3 pl-2 bg-[#d3d3d3]">
        {menus.map(m => (
          <button key={m} className="whitespace-nowrap">
            {m === 'Measure' ? m : <><span className="underline underline-offset-2">{m[0]}</span>{m.slice(1)}</>}
          </button>
        ))}
      </nav>

      <div className="h-8 shrink-0 flex items-center bg-linear-to-b from-[#d2d2d2] to-[#c6c6c6] border-b border-[#aaa]">
        <Handle lead />
        {renderTools('new open save saveAs refresh :')}
        <WorkbenchSelect />
        {renderTools(': fitAll fitSel drawStyle v boxSel | back forward linkGo v | zoomTool v iso | front top right | rear bottom left | ruler : part folder link linkGroup v')}
      </div>
      <div className="h-8 shrink-0 flex items-center bg-linear-to-b from-[#d2d2d2] to-[#c4c4c4] border-t border-[#dcdcdc] border-b border-b-[#999]">
        <Handle lead />
        {renderTools('body sketch mapSketch editSketch | point line plane lcs shape subShape clone : pad revolve loft pipe helix addPrim v : pocket hole groove subLoft subPipe subHelix subPrim v : mirror linPattern polPattern multi : fillet chamfer draft thickness : boolean')}
      </div>

      <main className="flex-1 min-h-0 flex">
        <aside className="w-[432px] shrink-0 flex flex-col pr-1">
          <div className="h-[18px] shrink-0 flex items-center gap-1 pl-px pr-0.5">
            <span className="mr-auto">Combo View</span>
            {['M2 3h3v3h-3zM4 2h3v3', 'M2 2l4 4M6 2l-4 4'].map((d, i) => (
              <button key={d} aria-label={['Float', 'Close panel'][i]}>
                <svg width="8" height="8" viewBox="0 0 8 8" fill="none">
                  <path d="M0.500 0.500h7v7h-7z" stroke="#777" />
                  <path d={d} stroke="#555" />
                </svg>
              </button>
            ))}
          </div>
          <Tabs labels={['Model', 'Tasks']} initial="Model" />

          <section className="flex-1 min-h-0 ml-px mt-px border border-[#a5a5a5] bg-[#fcfcfc]">
            <div className="flex h-[18px] bg-[#cecece]">
              <div className="w-[167px] pt-px pl-[3px] bg-[#fafafa] border-r border-b border-[#d5d5d5]">Labels &amp; Attributes</div>
              <div className="w-[66px] pt-px pl-0.5 bg-[#fafafa] border-b border-[#d5d5d5]">Description</div>
            </div>
            <ul className="grid auto-rows-fr h-[108px]">
              {nodes.map((n, i) => <TreeRow key={i} node={n} />)}
            </ul>
          </section>

          <div className="h-[5px] shrink-0 bg-[#c2c2c2]" />
          <PropertyTable />
          <div className="h-[22px] shrink-0 ml-px bg-[#d7d7d7] border-b border-r border-[#999]">
            <Tabs labels={['View', 'Data']} initial="Data" />
          </div>
          <div className="h-[22px] shrink-0">
            <Tabs labels={['Combo View', 'Report view', 'Selection view']} initial="Combo View" />
          </div>
        </aside>

        <div className="flex-1 min-w-0 flex flex-col">
          <div className="flex-1 min-h-0">
            <Scene />
          </div>
          <div className="h-[22px] shrink-0 flex">
            <div className="h-[21px] flex items-center gap-[5px] px-1 bg-[#dedede] border-r border-b border-[#b5b5b5]">
              <svg width="11" height="11" viewBox="0 0 12 12">
                <path d="M1 1h7v3h-4v2h3v2h-3v4h-3z" fill="#c4202f" />
                <circle cx="8" cy="8" r="2.500" fill="none" stroke="#2f4f86" strokeWidth="2" />
              </svg>
              <span className="whitespace-nowrap">FRONT-FANBRACKET : 1*</span>
              <button aria-label="Close document">
                <svg width="10" height="10" viewBox="0 0 10 10">
                  <rect width="10" height="10" rx="2" fill="#c9583f" />
                  <path d="M3 3l4 4M7 3l-4 4" stroke="#fff" strokeWidth="2" />
                </svg>
              </button>
            </div>
          </div>
        </div>
      </main>

      <footer className="h-[21px] shrink-0 flex items-center border-t border-[#e6e6e6]">
        <span className="pl-px mr-auto">Valid, Internal name: Pad</span>
        <button className="h-[19px] flex items-center gap-1 pl-[15px] pr-1 border border-[#e2e2e2] mr-1">
          <svg width="7" height="10" viewBox="0 0 7 10"><rect x="0.500" y="0.500" width="6" height="9" rx="3" fill="none" stroke="#444" /><path d="M3.500 2v3" stroke="#444" /></svg>
          CAD
          <svg className="ml-1" width="6" height="4" viewBox="0 0 6 4"><path d="M0 0h6l-3 4z" fill="#666" /></svg>
        </button>
        <span className="h-[19px] border-l border-y border-[#e2e2e2] whitespace-nowrap">220.21 mm x 149.92 mm</span>
      </footer>

      {/* pointer resting over the property list */}
      <svg className="absolute left-[285px] top-[570px] pointer-events-none" width="8" height="13" viewBox="0 0 8 13">
        <path d="M1 1v9l2-2 1.500 4 1.500-1-1.500-3.500h3z" fill="#fff" stroke="#333" strokeWidth="0.800" />
      </svg>
    </div>
  );
}
